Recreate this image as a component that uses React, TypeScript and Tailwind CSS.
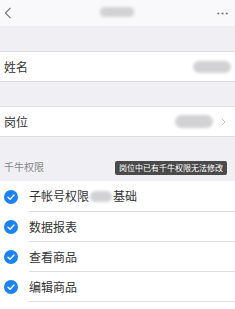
import React from 'react';

const font = { fontFamily: '"Noto Sans CJK SC", "Noto Sans", sans-serif' };

function Blob({ className }: { className: string }) {
  return <span className={`inline-block rounded-full bg-[#d2d2d4] blur-[1.5px] ${className}`} />;
}

function Check() {
  return (
    <svg width="14" height="14" viewBox="0 0 14 14" className="shrink-0">
      <circle cx="7" cy="7" r="7" fill="#1b82f1" />
      <path d="M4 7.2 L6.1 9.2 L10 5" fill="none" stroke="#fff" strokeWidth="1.4" strokeLinecap="round" strokeLinejoin="round" />
    </svg>
  );
}

const perms = ['数据报表', '查看商品', '编辑商品'];

export default function App() {
  return (
    <div className="w-[235px] h-[309px] overflow-hidden bg-[#efeff4] text-[#333]" style={font}>
      {/* nav bar */}
      <div className="h-[26px] bg-[#f9f9fb] flex items-center justify-between pl-[4px] pr-[7px] relative">
        <svg width="8" height="12" viewBox="0 0 8 12">
          <path d="M6.5 0.8 L1.5 6 L6.5 11.2" fill="none" stroke="#777" strokeWidth="1.2" />
        </svg>
        <Blob className="absolute left-[100px] top-[7px] w-[34px] h-[10px]" />
        <svg width="11" height="3" viewBox="0 0 11 3">
          <circle cx="1.3" cy="1.5" r="1.1" fill="#777" />
          <circle cx="5.5" cy="1.5" r="1.1" fill="#777" />
          <circle cx="9.7" cy="1.5" r="1.1" fill="#777" />
        </svg>
      </div>

      <div className="h-[25px]" />

      <div className="h-[31px] bg-white border-y border-[#dedee0] flex items-center justify-between pl-[4px] pr-[4px]">
        <span className="text-[12px]">姓名</span>
        <Blob className="w-[38px] h-[12px] rounded-[6px]" />
      </div>

      <div className="h-[24px]" />

      <div className="h-[31px] bg-white border-y border-[#dedee0] flex items-center justify-between pl-[4px] pr-[9px]">
        <span className="text-[12px]">岗位</span>
        <div className="flex items-center gap-[8px]">
          <Blob className="w-[38px] h-[13px] rounded-[4px]" />
          <svg width="5" height="8" viewBox="0 0 5 8">
            <path d="M0.8 0.8 L4 4 L0.8 7.2" fill="none" stroke="#c4c4c8" strokeWidth="1" />
          </svg>
        </div>
      </div>

      <div className="h-[44px] flex items-end justify-between pl-[4px] pr-[8px] pb-[6px]">
        <span className="text-[10px] text-[#888] leading-none mb-[3px]">千牛权限</span>
        <span className="bg-[#4a4a4a] text-white text-[8px] leading-none rounded-[2px] px-[4px] py-[3px] whitespace-nowrap">
          岗位中已有千牛权限无法修改
        </span>
      </div>

      <div className="bg-white">
        <div className="flex items-center h-[31px] pl-[4px]">
          <Check />
          <div className="flex-1 ml-[11px] h-full flex items-center border-b border-[#dedee0] text-[12px]">
            <span>子帐号权限</span>
            <Blob className="w-[22px] h-[11px] mx-[1px]" />
            <span>基础</span>
          </div>
        </div>
        {perms.map((p) => (
          <div key={p} className="flex items-center h-[30px] pl-[4px]">
            <Check />
            <div className="flex-1 ml-[11px] h-full flex items-center border-b border-[#dedee0] text-[12px]">
              {p}
            </div>
          </div>
        ))}
        <div className="h-[10px]" />
      </div>
    </div>
  );
}
